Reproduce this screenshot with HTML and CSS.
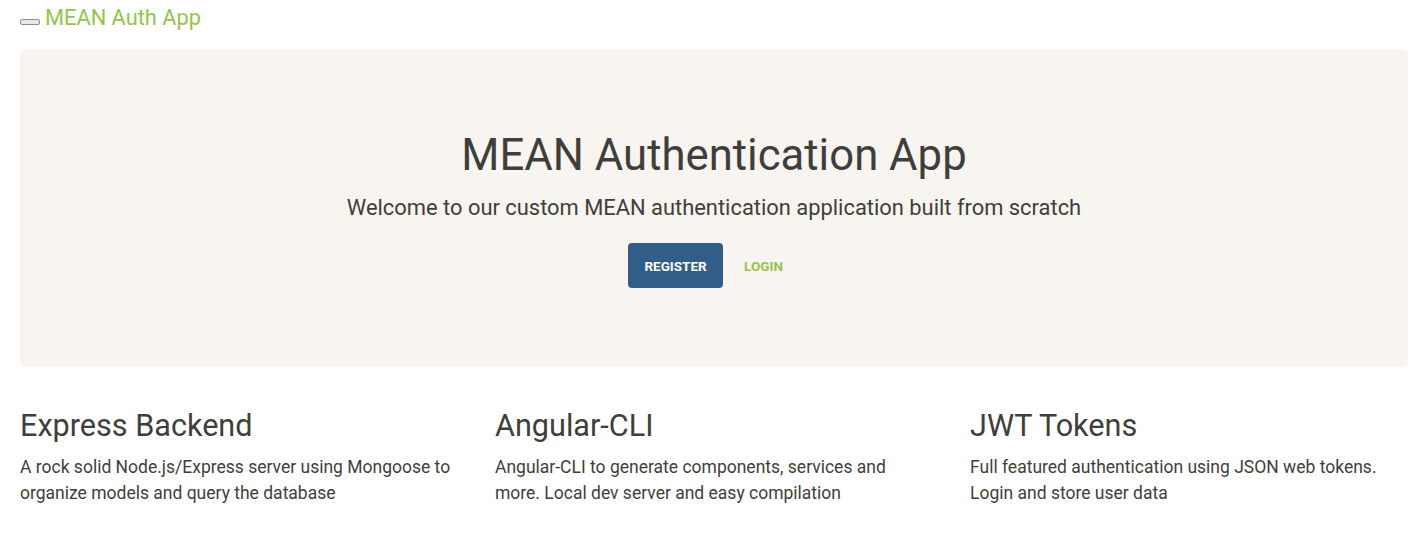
FILE: index.html
```html
<!DOCTYPE html>
<html>
<head>
<meta charset="utf-8">
<link rel="stylesheet" href="styles.css">
</head>
<body>
<nav class="navbar">
  <button class="toggler" type="button"></button>
  <a class="brand" href="#">MEAN Auth App</a>
</nav>
<main class="page">
  <section class="jumbotron">
    <h1 class="title">MEAN Authentication App</h1>
    <p class="lead">Welcome to our custom MEAN authentication application built from scratch</p>
    <div class="actions">
      <a class="btn btn-primary" href="#">Register</a>
      <a class="btn btn-link" href="#">Login</a>
    </div>
  </section>
  <section class="features">
    <div class="feature">
      <h2>Express Backend</h2>
      <p>A rock solid Node.js/Express server using Mongoose to organize models and query the database</p>
    </div>
    <div class="feature">
      <h2>Angular-CLI</h2>
      <p>Angular-CLI to generate components, services and more. Local dev server and easy compilation</p>
    </div>
    <div class="feature">
      <h2>JWT Tokens</h2>
      <p>Full featured authentication using JSON web tokens. Login and store user data</p>
    </div>
  </section>
</main>
</body>
</html>
```
FILE: styles.css
```css
* { box-sizing: border-box; }
html, body { margin: 0; padding: 0; }
body {
  font-family: Roboto, "Liberation Sans", sans-serif;
  color: #3e3f3a;
  background: #fff;
}
.navbar {
  display: flex;
  align-items: center;
  height: 36px;
  padding: 0 20px;
}
.toggler {
  width: 20px;
  height: 6px;
  padding: 0;
  margin: 8px 5px 0 0;
  background: #e9e9e9;
  border: 1px solid #8f8f8f;
  border-radius: 2px;
}
.brand {
  font-size: 21.8px;
  color: #93c54b;
  text-decoration: none;
  line-height: 1;
}
.page { padding: 13px 4px 0 20px; }
.jumbotron {
  background: #f8f5f0;
  border-radius: 6px;
  height: 318px;
  padding-top: 80px;
  text-align: center;
}
.title {
  margin: 0;
  font-size: 43.7px;
  font-weight: 400;
  line-height: 1.2;
}
.lead {
  margin: 11px 0 0;
  font-size: 21.9px;
  font-weight: 400;
  line-height: 1.5;
}
.actions {
  margin-top: 18px;
  display: flex;
  justify-content: center;
}
.btn {
  display: inline-flex;
  align-items: center;
  justify-content: center;
  height: 45px;
  padding: 0 16px;
  font-size: 13.5px;
  font-weight: 700;
  text-transform: uppercase;
  text-decoration: none;
  border-radius: 4px;
}
.btn-primary {
  background: #325d88;
  color: #fff;
  width: 95px;
}
.btn-link {
  color: #93c54b;
  padding: 0 17px 0 21px;
}
.features {
  display: grid;
  grid-template-columns: repeat(3, 475px);
  margin-top: 41px;
}
.feature { padding-right: 40px; }
.feature h2 {
  margin: 0;
  font-size: 30.6px;
  font-weight: 400;
  line-height: 1.2;
}
.feature p {
  margin: 9px 0 0;
  font-size: 17.5px;
  line-height: 26px;
  font-weight: 400;
}
```
